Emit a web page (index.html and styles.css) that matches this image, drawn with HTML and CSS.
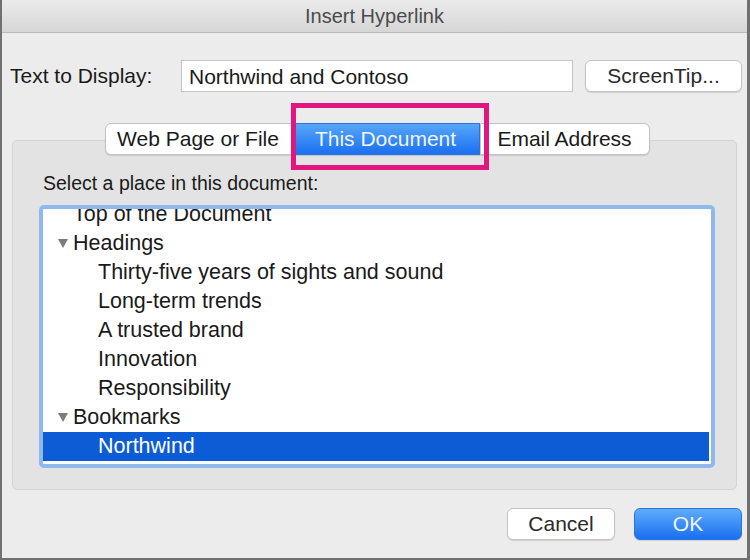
FILE: index.html
```html
<!DOCTYPE html>
<html>
<head>
    <title>Insert Hyperlink</title>
    <meta charset="utf-8">
    <link rel="stylesheet" href="styles.css">
</head>
<body>
    <div class="window">
        <div class="titlebar">Insert Hyperlink</div>

        <div class="display-row">
            <label class="display-label">Text to Display:</label>
            <div class="text-field">Northwind and Contoso</div>
            <button class="btn screentip">ScreenTip...</button>
        </div>

        <div class="tabview">
            <div class="tabs">
                <div class="tab first">Web Page or File</div>
                <div class="tab active">This Document</div>
                <div class="tab last">Email Address</div>
                <div class="highlight"></div>
            </div>
            <div class="panel">
                <div class="panel-label">Select a place in this document:</div>
                <div class="listbox">
                    <div class="list-inner">
                        <div class="row top">Top of the Document</div>
                        <div class="row top"><span class="arrow"></span>Headings</div>
                        <div class="row child">Thirty-five years of sights and sound</div>
                        <div class="row child">Long-term trends</div>
                        <div class="row child">A trusted brand</div>
                        <div class="row child">Innovation</div>
                        <div class="row child">Responsibility</div>
                        <div class="row top"><span class="arrow"></span>Bookmarks</div>
                        <div class="row child selected">Northwind</div>
                    </div>
                </div>
            </div>
        </div>

        <div class="footer">
            <button class="btn cancel">Cancel</button>
            <button class="btn ok">OK</button>
        </div>
    </div>
</body>
</html>
```

FILE: styles.css
```css
:root {
    --win-bg: #ececec;
    --panel-bg: #e3e3e3;
    --text: #1a1a1a;
    --select: #0b5cd5;
    --pink: #e2167f;
}
body {
    margin: 0;
    font-family: "Liberation Sans", Arial, sans-serif;
    color: var(--text);
}
.window {
    width: 750px;
    height: 560px;
    box-sizing: border-box;
    background-color: var(--win-bg);
    border: 2px solid #707070;
    border-top: none;
    border-right-width: 3px;
    position: relative;
}
.titlebar {
    height: 33px;
    box-sizing: border-box;
    background: linear-gradient(#ebebeb, #d6d6d6);
    border-bottom: 1px solid #b9b9b9;
    text-align: center;
    line-height: 33px;
    font-size: 20px;
    color: #4b4b4b;
}
.display-row {
    display: flex;
    align-items: center;
    margin-top: 27px;
    padding-left: 8px;
    height: 32px;
}
.display-label {
    width: 171px;
    font-size: 21px;
}
.text-field {
    width: 392px;
    height: 32px;
    box-sizing: border-box;
    background: #fff;
    border: 1px solid #c6c6c6;
    padding-left: 7px;
    line-height: 31px;
    font-size: 21px;
}
.btn {
    font-family: "Liberation Sans", Arial, sans-serif;
    font-size: 21px;
    color: #2a2a2a;
    background: #fff;
    border: 1px solid #c3c3c3;
    border-radius: 6px;
    box-shadow: 0 1px 1px rgba(0, 0, 0, 0.12);
    height: 32px;
    padding: 0;
}
.screentip {
    width: 157px;
    margin-left: 12px;
}
.tabview {
    margin: 31px 10px 0 10px;
}
.tabs {
    display: flex;
    justify-content: center;
    position: relative;
    z-index: 1;
    padding-left: 5px;
}
.tab {
    height: 32px;
    box-sizing: border-box;
    line-height: 30px;
    font-size: 21px;
    text-align: center;
    background: #fff;
    border: 1px solid #c2c2c2;
    box-shadow: 0 1px 1px rgba(0, 0, 0, 0.12);
}
.tab.first {
    width: 187px;
    border-radius: 6px 0 0 6px;
}
.tab.active {
    width: 188px;
    color: #eef5ff;
    background: linear-gradient(#56a7fa, #1b6ff0);
    border-color: #2a74e0;
}
.tab.last {
    width: 170px;
    border-radius: 0 6px 6px 0;
}
.highlight {
    position: absolute;
    left: 279px;
    top: -20px;
    width: 198px;
    height: 67px;
    box-sizing: border-box;
    border: 5px solid var(--pink);
}
.panel {
    margin-top: -15px;
    height: 350px;
    box-sizing: border-box;
    background-color: var(--panel-bg);
    border: 1px solid #d4d4d4;
    border-radius: 5px;
    padding: 31px 21px 0 26px;
}
.panel-label {
    font-size: 19.5px;
    line-height: 22px;
    padding-left: 4px;
}
.listbox {
    margin-top: 11px;
    height: 263px;
    box-sizing: border-box;
    border: 4px solid #8fb9ec;
    border-radius: 5px;
    background: #fff;
    overflow: hidden;
}
.list-inner {
    margin-top: -9px;
}
.row {
    height: 29px;
    line-height: 29px;
    font-size: 21.5px;
    white-space: nowrap;
}
.row.top {
    padding-left: 30px;
    position: relative;
}
.row.child {
    padding-left: 55px;
}
.row.selected {
    background-color: var(--select);
    color: #fff;
    margin-right: 2px;
}
.arrow {
    position: absolute;
    left: 15px;
    top: 10px;
    border-left: 5px solid transparent;
    border-right: 5px solid transparent;
    border-top: 9px solid #7c7c7c;
}
.footer {
    display: flex;
    justify-content: flex-end;
    gap: 19px;
    margin-top: 18px;
    padding-right: 5px;
}
.cancel, .ok {
    width: 108px;
}
.ok {
    color: #f2f7ff;
    background: linear-gradient(#5eadfb, #1a6ff0);
    border-color: #2b73df;
}
```
